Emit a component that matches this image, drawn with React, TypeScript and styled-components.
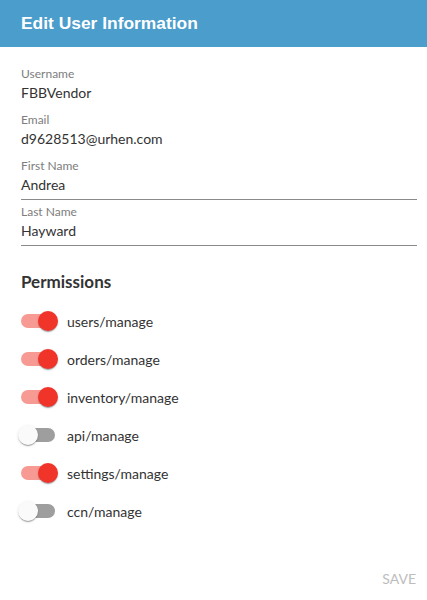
import { useState } from 'react';
import styled, { createGlobalStyle } from 'styled-components';

const GlobalStyle = createGlobalStyle`
  body {
    margin: 0;
    background: #fff;
    font-family: Lato, 'Noto Sans', sans-serif;
  }
`;

interface Permission {
  name: string;
  enabled: boolean;
}

const initialPermissions: Permission[] = [
  { name: 'users/manage', enabled: true },
  { name: 'orders/manage', enabled: true },
  { name: 'inventory/manage', enabled: true },
  { name: 'api/manage', enabled: false },
  { name: 'settings/manage', enabled: true },
  { name: 'ccn/manage', enabled: false },
];

const App = () => {
  const [permissions, setPermissions] = useState(initialPermissions);

  const toggle = (index: number) => {
    setPermissions((list) =>
      list.map((p, i) => (i === index ? { ...p, enabled: !p.enabled } : p)),
    );
  };

  return (
    <Page>
      <GlobalStyle />
      <Header>Edit User Information</Header>
      <Form>
        <Field>
          <Label>Username</Label>
          <Value>FBBVendor</Value>
        </Field>
        <Field>
          <Label>Email</Label>
          <Value>d9628513@urhen.com</Value>
        </Field>
        <Field>
          <Label>First Name</Label>
          <Value $editable>Andrea</Value>
        </Field>
        <Field>
          <Label>Last Name</Label>
          <Value $editable>Hayward</Value>
        </Field>

        <SectionTitle>Permissions</SectionTitle>
        <PermissionList>
          {permissions.map((p, i) => (
            <PermissionRow key={p.name} onClick={() => toggle(i)}>
              <Switch $on={p.enabled}>
                <Track />
                <Thumb />
              </Switch>
              <PermissionName>{p.name}</PermissionName>
            </PermissionRow>
          ))}
        </PermissionList>
      </Form>
      <Actions>
        <SaveButton disabled>Save</SaveButton>
      </Actions>
    </Page>
  );
};

export default App;

const Page = styled.div`
  display: flex;
  flex-direction: column;
  min-height: 100vh;
`;

const Header = styled.div`
  display: flex;
  align-items: center;
  height: 47px;
  padding: 0 21px;
  background: #4b9dcb;
  color: #fff;
  font-family: 'Liberation Sans', Arial, sans-serif;
  font-size: 17.4px;
  font-weight: 700;
`;

const Form = styled.div`
  padding: 20px 10px 0 21px;
`;

const Field = styled.div`
  display: flex;
  flex-direction: column;
  margin-bottom: 5px;
`;

const Label = styled.span`
  font-size: 12px;
  line-height: 14px;
  color: #7d7d7d;
`;

const Value = styled.div<{ $editable?: boolean }>`
  font-size: 14px;
  line-height: 24px;
  padding-bottom: 2px;
  color: #333;
  border-bottom: 1px solid
    ${({ $editable }) => ($editable ? '#8a8a8a' : 'transparent')};
`;

const SectionTitle = styled.h2`
  margin: 25px 0 9px;
  font-size: 17px;
  line-height: 22px;
  font-weight: 700;
  color: #333;
`;

const PermissionList = styled.div`
  display: flex;
  flex-direction: column;
  margin-left: -12px;
`;

const PermissionRow = styled.label`
  display: flex;
  align-items: center;
  height: 38px;
  cursor: pointer;
`;

const Switch = styled.span<{ $on: boolean }>`
  position: relative;
  flex: none;
  width: 58px;
  height: 38px;

  > span:first-child {
    background: ${({ $on }) => ($on ? '#f89a94' : '#9e9e9e')};
  }
  > span:last-child {
    left: ${({ $on }) => ($on ? '29px' : '9px')};
    background: ${({ $on }) => ($on ? '#f0342a' : '#fafafa')};
  }
`;

const Track = styled.span`
  position: absolute;
  top: 12px;
  left: 12px;
  width: 34px;
  height: 14px;
  border-radius: 7px;
`;

const Thumb = styled.span`
  position: absolute;
  top: 9px;
  width: 20px;
  height: 20px;
  border-radius: 50%;
  box-shadow: 0 2px 1px -1px rgba(0, 0, 0, 0.2), 0 1px 1px 0 rgba(0, 0, 0, 0.14),
    0 1px 3px 0 rgba(0, 0, 0, 0.12);
`;

const PermissionName = styled.span`
  font-size: 14px;
  color: #333;
`;

const Actions = styled.div`
  display: flex;
  justify-content: flex-end;
  margin-top: auto;
  padding: 0 3px 3px 0;
`;

const SaveButton = styled.button`
  border: none;
  background: none;
  padding: 6px 8px;
  font-family: Lato, sans-serif;
  font-size: 14px;
  line-height: 24px;
  text-transform: uppercase;
  color: #bdbdbd;
`;
